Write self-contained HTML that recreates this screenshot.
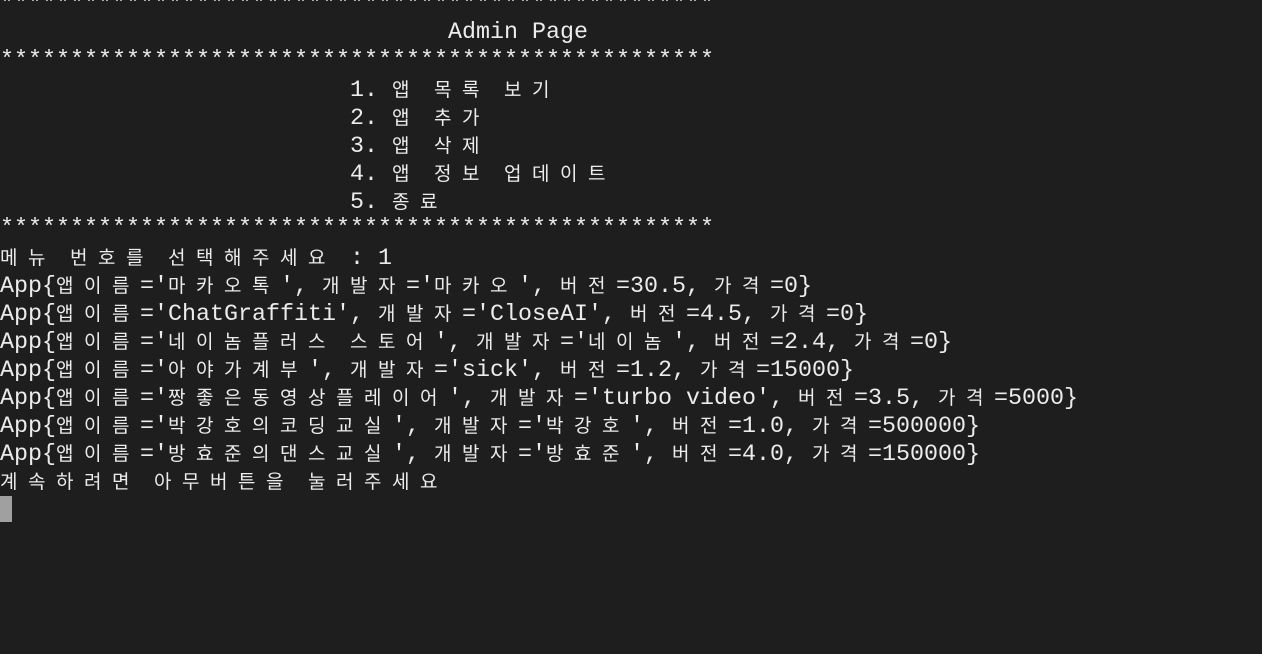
<!DOCTYPE html>
<html><head><meta charset="utf-8"><style>
html,body{margin:0;padding:0;background:#1e1e1e;width:1262px;height:654px;overflow:hidden}
#t{margin-top:-9px;color:#ececec;font-family:"Liberation Mono",monospace;font-size:23.33px}
.l{height:28px;line-height:28px;white-space:pre}
.k{font-family:"Noto Sans CJK KR","NanumGothic",sans-serif;font-size:19px}
.k i{font-style:normal;display:inline-block;width:28px;text-align:left}
.c{display:inline-block;width:12px;height:26px;background:#a0a0a0;vertical-align:top;margin-top:1px}
</style></head><body><div id="t"><div class="l">***************************************************</div><div class="l">                                Admin Page</div><div class="l">***************************************************</div><div class="l">                         1. <span class="k">앱</span> <span class="k">목록</span> <span class="k">보기</span></div><div class="l">                         2. <span class="k">앱</span> <span class="k">추가</span></div><div class="l">                         3. <span class="k">앱</span> <span class="k">삭제</span></div><div class="l">                         4. <span class="k">앱</span> <span class="k">정보</span> <span class="k">업데이트</span></div><div class="l">                         5. <span class="k">종료</span></div><div class="l">***************************************************</div><div class="l"><span class="k">메뉴</span> <span class="k">번호를</span> <span class="k">선택해주세요</span> : 1</div><div class="l">App{<span class="k">앱이름</span>='<span class="k">마카오톡</span>', <span class="k">개발자</span>='<span class="k">마카오</span>', <span class="k">버전</span>=30.5, <span class="k">가격</span>=0}</div><div class="l">App{<span class="k">앱이름</span>='ChatGraffiti', <span class="k">개발자</span>='CloseAI', <span class="k">버전</span>=4.5, <span class="k">가격</span>=0}</div><div class="l">App{<span class="k">앱이름</span>='<span class="k">네이놈플러스</span> <span class="k">스토어</span>', <span class="k">개발자</span>='<span class="k">네이놈</span>', <span class="k">버전</span>=2.4, <span class="k">가격</span>=0}</div><div class="l">App{<span class="k">앱이름</span>='<span class="k">아야가계부</span>', <span class="k">개발자</span>='sick', <span class="k">버전</span>=1.2, <span class="k">가격</span>=15000}</div><div class="l">App{<span class="k">앱이름</span>='<span class="k">짱좋은동영상플레이어</span>', <span class="k">개발자</span>='turbo video', <span class="k">버전</span>=3.5, <span class="k">가격</span>=5000}</div><div class="l">App{<span class="k">앱이름</span>='<span class="k">박강호의코딩교실</span>', <span class="k">개발자</span>='<span class="k">박강호</span>', <span class="k">버전</span>=1.0, <span class="k">가격</span>=500000}</div><div class="l">App{<span class="k">앱이름</span>='<span class="k">방효준의댄스교실</span>', <span class="k">개발자</span>='<span class="k">방효준</span>', <span class="k">버전</span>=4.0, <span class="k">가격</span>=150000}</div><div class="l"><span class="k">계속하려면</span> <span class="k">아무버튼을</span> <span class="k">눌러주세요</span></div><div class="l"><span class="c"></span></div></div>
<script>
document.querySelectorAll('.k').forEach(function(e){var s=e.textContent;e.innerHTML='';for(var j=0;j<s.length;j++){var i=document.createElement('i');i.textContent=s[j];e.appendChild(i);}});
</script>
</body></html>
